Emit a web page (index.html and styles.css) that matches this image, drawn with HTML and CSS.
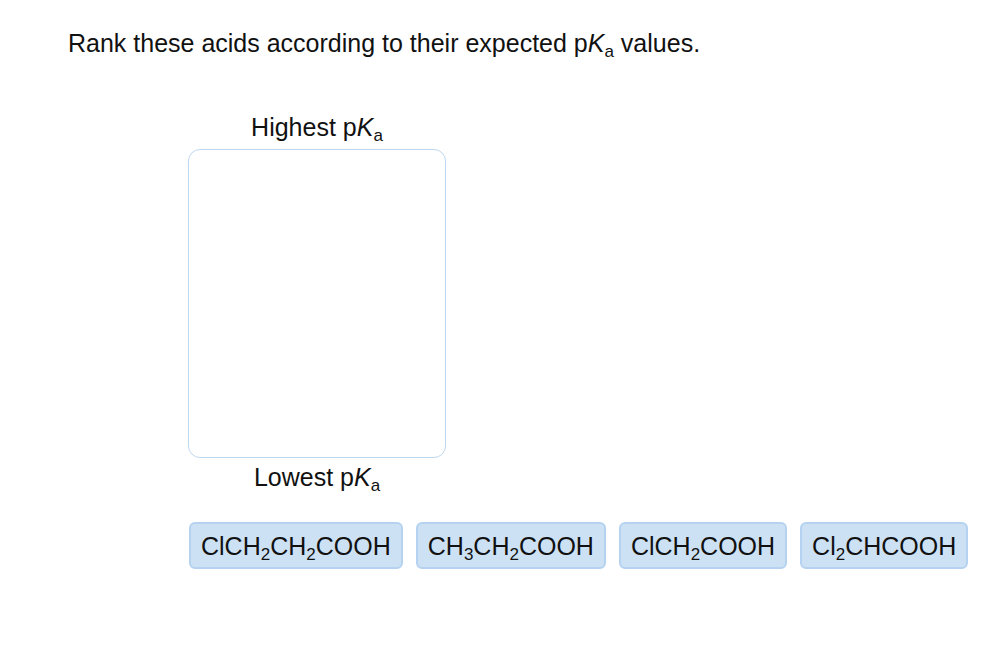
FILE: index.html
```html
<!DOCTYPE html>
<html>
<head>
<meta charset="utf-8">
<link rel="stylesheet" href="styles.css">
</head>
<body>
<div class="page">
  <p class="prompt">Rank these acids according to their expected p<i>K</i><sub>a</sub> values.</p>
  <div class="ranker">
    <div class="label label-top">Highest p<i>K</i><sub>a</sub></div>
    <div class="dropzone"></div>
    <div class="label label-bottom">Lowest p<i>K</i><sub>a</sub></div>
  </div>
  <div class="chips">
    <div class="chip"><span>ClCH<sub>2</sub>CH<sub>2</sub>COOH</span></div>
    <div class="chip"><span>CH<sub>3</sub>CH<sub>2</sub>COOH</span></div>
    <div class="chip"><span>ClCH<sub>2</sub>COOH</span></div>
    <div class="chip"><span>Cl<sub>2</sub>CHCOOH</span></div>
  </div>
</div>
</body>
</html>
```

FILE: styles.css
```css
html, body {
  margin: 0;
  padding: 0;
  background: #ffffff;
}
body {
  font-family: "Liberation Sans", Arial, sans-serif;
  color: #111111;
  font-size: 25px;
  line-height: 30px;
}
.page {
  width: 1000px;
  height: 650px;
  padding-top: 28px;
  box-sizing: border-box;
}
.prompt {
  margin: 0 0 0 68px;
}
sub {
  font-size: 17px;
  line-height: 0;
  vertical-align: -5px;
}
i {
  font-style: italic;
}
.ranker {
  margin-top: 54px;
  margin-left: 188px;
  width: 258px;
  display: flex;
  flex-direction: column;
  align-items: center;
}
.label {
  text-align: center;
  width: 100%;
}
.label-top {
  margin-bottom: 7px;
}
.dropzone {
  width: 258px;
  height: 309px;
  box-sizing: border-box;
  border: 1px solid #bed8f0;
  border-radius: 12px;
  background: #ffffff;
}
.label-bottom {
  margin-top: 4px;
}
.chips {
  display: flex;
  gap: 13px;
  margin-left: 189px;
  margin-top: 30px;
}
.chip {
  height: 47px;
  box-sizing: border-box;
  padding: 0 10px;
  display: flex;
  align-items: center;
  background: #cde1f5;
  border: 2px solid #b5d3f0;
  border-radius: 6px;
  color: #111111;
  white-space: nowrap;
}
```
